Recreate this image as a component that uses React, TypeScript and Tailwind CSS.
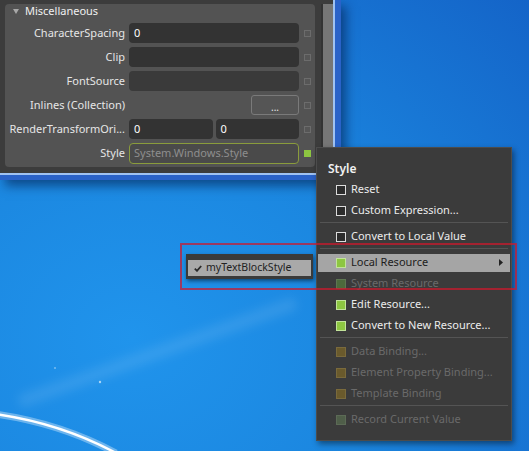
import React from 'react'

type Box = 'empty' | 'green' | 'greenDim' | 'brown' | 'olive'

const boxClass: Record<Box, string> = {
  empty: 'border border-[#dcdcdc] bg-[#2c2c2c]',
  green: 'border border-[#c2e39a] bg-[#8dc641]',
  greenDim: 'border border-[#5e7652] bg-[#4c6a3c]',
  brown: 'border border-[#7a6a3c] bg-[#6a5a2c]',
  olive: 'border border-[#5c6a56] bg-[#4f5e49]',
}

function MenuItem({
  label,
  box,
  disabled,
  highlight,
  arrow,
}: {
  label: string
  box: Box
  disabled?: boolean
  highlight?: boolean
  arrow?: boolean
}) {
  const text = highlight ? 'text-[#1c1c1c]' : disabled ? 'text-[#6a6a6a]' : 'text-[#ececec]'
  return (
    <div className="h-[21px] px-[1px] flex items-center">
      <div className={`flex items-center h-[18px] w-full pl-[18px] pr-[7px] ${highlight ? 'bg-[#a5a5a5]' : ''}`}>
        <span className={`w-[10px] h-[10px] shrink-0 ${boxClass[box]}`} />
        <span className={`ml-[5px] text-[11px] whitespace-nowrap ${text}`}>{label}</span>
        {arrow && (
          <svg className="ml-auto" width="4" height="7" viewBox="0 0 4 7">
            <path d="M0 0 L4 3.5 L0 7 Z" fill="#222" />
          </svg>
        )}
      </div>
    </div>
  )
}

function Sep() {
  return (
    <div className="h-[5px] pt-[1px] px-[3px]">
      <div className="h-px bg-[#545454]" />
    </div>
  )
}

function Marker({ on }: { on?: boolean }) {
  return on ? (
    <span className="w-[7px] h-[7px] bg-[#8dc641]" />
  ) : (
    <span className="w-[7px] h-[7px] border border-[#6c6c6c] bg-[#565656]" />
  )
}

function PropRow({ label, children, on }: { label: string; children: React.ReactNode; on?: boolean }) {
  return (
    <div className="h-[24px] flex items-center">
      <div className="w-[120px] text-right text-[11px] text-[#e6e6e6] whitespace-nowrap">{label}</div>
      <div className="ml-[4px] w-[170px] flex gap-[3px]">{children}</div>
      <div className="ml-[5px] flex items-center">
        <Marker on={on} />
      </div>
    </div>
  )
}

function Field({ value, tone = 'bg-[#333333]' }: { value?: string; tone?: string }) {
  return (
    <div className={`flex-1 h-[20px] rounded-[4px] ${tone} px-[5px] flex items-center text-[11px] text-white`}>
      {value}
    </div>
  )
}

export default function App() {
  return (
    <div className="relative w-[529px] h-[451px] overflow-hidden font-['Noto_Sans',sans-serif] bg-[radial-gradient(ellipse_at_25%_75%,#2094ec_0%,#1b86df_45%,#1464c8_100%)]">
      {/* wallpaper glow */}
      <svg className="absolute left-0 top-0" width="529" height="451" viewBox="0 0 529 451">
        <defs>
          <filter id="soft" x="-20%" y="-50%" width="140%" height="200%">
            <feGaussianBlur stdDeviation="5" />
          </filter>
        </defs>
        <path d="M25 400 L290 305" stroke="rgba(255,255,255,0.09)" strokeWidth="14" strokeLinecap="round" filter="url(#soft)" />
        <path d="M-5 414 Q 60 423 116 453" stroke="rgba(255,255,255,0.35)" strokeWidth="7" fill="none" />
        <path d="M-5 414 Q 60 423 116 453" stroke="#ffffff" strokeWidth="2.5" fill="none" />
        <circle cx="100" cy="382" r="1.2" fill="rgba(255,255,255,0.6)" />
        <circle cx="55" cy="368" r="1" fill="rgba(255,255,255,0.4)" />
      </svg>

      {/* properties window */}
      <div className="relative w-[341px] h-[180px] bg-[#2a62c8] shadow-[5px_6px_10px_rgba(0,25,70,0.55)]">
        <div className="w-[335px] h-[175px] border-r-2 border-b-2 border-[#9fc2f2]">
          <div className="w-[333px] h-[173px] bg-[#3c3c3c] flex pl-[5px] pt-[4px]">
            <div className="w-[310px] h-[163px] bg-[#535353] rounded-[4px] flex flex-col">
              <div className="h-[17px] pb-[2px] pl-[8px] flex items-center">
                <svg width="6" height="5" viewBox="0 0 6 5">
                  <path d="M0 0 L6 0 L3 5 Z" fill="#a8a8a8" />
                </svg>
                <span className="ml-[6px] text-[11px] text-[#f0f0f0]">Miscellaneous</span>
              </div>
              <PropRow label="CharacterSpacing">
                <Field value="0" />
              </PropRow>
              <PropRow label="Clip">
                <Field />
              </PropRow>
              <PropRow label="FontSource">
                <Field tone="bg-[#3a3a3a]" />
              </PropRow>
              <PropRow label="Inlines (Collection)">
                <div className="flex-1" />
                <div className="w-[48px] h-[20px] rounded-[3px] border border-[#7a7a7a] bg-[#555555] flex items-end justify-center pb-[2px] text-[10px] leading-none text-[#e6e6e6]">
                  ...
                </div>
              </PropRow>
              <PropRow label="RenderTransformOri...">
                <Field value="0" />
                <Field value="0" />
              </PropRow>
              <PropRow label="Style" on>
                <div className="flex-1 h-[21px] rounded-[4px] border border-[#8a9c3c] bg-[#4a4a4a] px-[4px] flex items-center text-[11px] text-[#8e8e8e]">
                  System.Windows.Style
                </div>
              </PropRow>
            </div>
            <div className="ml-[6px] w-[2px] h-full bg-[#333333]" />
            <div className="w-[10px] h-full bg-[#767676]" />
          </div>
        </div>
      </div>

      {/* context menu */}
      <div className="absolute left-[316px] top-[147px] w-[196px] border border-[#4c4c4c] bg-[#3b3b3b] pt-[10px] pb-[10px] shadow-[2px_3px_6px_rgba(0,0,0,0.45)]">
        <div className="h-[21px] pl-[11px] flex items-center text-[12px] font-semibold text-[#f2f2f2]">Style</div>
        <MenuItem label="Reset" box="empty" />
        <MenuItem label="Custom Expression..." box="empty" />
        <Sep />
        <MenuItem label="Convert to Local Value" box="empty" />
        <Sep />
        <MenuItem label="Local Resource" box="green" highlight arrow />
        <MenuItem label="System Resource" box="greenDim" disabled />
        <MenuItem label="Edit Resource..." box="green" />
        <MenuItem label="Convert to New Resource..." box="green" />
        <Sep />
        <MenuItem label="Data Binding..." box="brown" disabled />
        <MenuItem label="Element Property Binding..." box="brown" disabled />
        <MenuItem label="Template Binding" box="brown" disabled />
        <Sep />
        <MenuItem label="Record Current Value" box="olive" disabled />
      </div>

      {/* submenu */}
      <div className="absolute left-[186px] top-[254px] w-[127px] h-[25px] bg-[#3a3a3a] pt-[6px] px-[2px] shadow-[1px_2px_4px_rgba(0,0,0,0.5)]">
        <div className="h-[16px] bg-[#a9a9a9] flex items-center pl-[6px]">
          <svg width="8" height="7" viewBox="0 0 8 7">
            <path d="M0.8 3.6 L3 5.8 L7.2 1" stroke="#2a2a2a" strokeWidth="1.8" fill="none" />
          </svg>
          <span className="ml-[4px] text-[10.5px] text-[#222222] whitespace-nowrap">myTextBlockStyle</span>
        </div>
      </div>

      {/* annotation box */}
      <div className="absolute left-[180px] top-[243px] w-[337px] h-[47px] border-2 border-[rgba(205,25,45,0.72)]" />
    </div>
  )
}
